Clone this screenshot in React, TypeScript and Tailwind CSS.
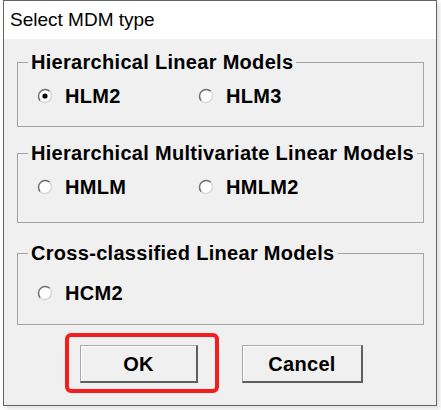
const FONT = { fontFamily: '"Liberation Sans", Arial, sans-serif' }

function Radio({ checked }: { checked?: boolean }) {
  return (
    <svg width="16" height="16" viewBox="0 0 16 16" className="shrink-0">
      <circle cx="8" cy="8" r="6.8" fill="#fff" />
      <path d="M3.2 12.8 A6.8 6.8 0 0 1 12.8 3.2" fill="none" stroke="#6f6f6f" strokeWidth="1.5" />
      <path d="M12.8 3.2 A6.8 6.8 0 0 1 3.2 12.8" fill="none" stroke="#d8d8d8" strokeWidth="1.5" />
      {checked && <circle cx="8" cy="8" r="2.6" fill="#000" />}
    </svg>
  )
}

function Option({ label, checked, className = '' }: { label: string; checked?: boolean; className?: string }) {
  return (
    <div className={`flex items-center gap-[12px] h-[22px] ${className}`}>
      <Radio checked={checked} />
      <span className="text-[20px] leading-[22px] font-bold tracking-[0.3px] text-black">{label}</span>
    </div>
  )
}

function Group({ title, children, className = '' }: { title: string; children: React.ReactNode; className?: string }) {
  return (
    <fieldset className={`border border-[#a3a3a3] m-0 min-w-0 ${className}`}>
      <legend className="ml-[10px] px-[3px] text-[20px] leading-[22px] font-bold tracking-[0.3px] text-black">
        {title}
      </legend>
      {children}
    </fieldset>
  )
}

function Btn({ label, className = '' }: { label: string; className?: string }) {
  return (
    <button
      className={`h-[38px] bg-[#f0f0f0] border-t border-l border-t-[#a8a8a8] border-l-[#a8a8a8] border-b-2 border-r-2 border-b-[#5e5e5e] border-r-[#5e5e5e] shadow-[inset_1px_1px_0_#ffffff] text-[20px] font-bold tracking-[0.3px] text-black ${className}`}
    >
      {label}
    </button>
  )
}

export default function App() {
  return (
    <div className="w-[441px] h-[410px] bg-white" style={FONT}>
      <div className="ml-[3px] w-[434px] h-[406px] border border-[#646464] flex flex-col shadow-[3px_3px_4px_rgba(0,0,0,0.12)]">
        <div className="h-[38px] bg-white pl-[6px] pt-[8px]">
          <div className="text-[19px] leading-[22px] text-black">Select MDM type</div>
        </div>
        <div className="flex-1 bg-[#f0f0f0] pt-[12px] pl-[13px] pr-[12px]">
          <Group title="Hierarchical Linear Models" className="pt-[12px] pb-[19px]">
            <div className="flex pl-[19px]">
              <Option label="HLM2" checked className="w-[161px]" />
              <Option label="HLM3" />
            </div>
          </Group>
          <Group title="Hierarchical Multivariate Linear Models" className="mt-[15px] pt-[12px] pb-[24px]">
            <div className="flex pl-[19px]">
              <Option label="HMLM" className="w-[161px]" />
              <Option label="HMLM2" />
            </div>
          </Group>
          <Group title="Cross-classified Linear Models" className="mt-[19px] pt-[18px] pb-[20px]">
            <div className="flex pl-[19px]">
              <Option label="HCM2" />
            </div>
          </Group>
          <div className="flex mt-[20px] pl-[63px]">
            <div className="relative">
              <Btn label="OK" className="w-[118px]" />
              <div className="absolute left-[-15px] right-[-21px] top-[-12px] bottom-[-10px] border-4 border-[#f51c1c] rounded-[6px]" />
            </div>
            <Btn label="Cancel" className="w-[121px] ml-[44px]" />
          </div>
        </div>
      </div>
    </div>
  )
}
